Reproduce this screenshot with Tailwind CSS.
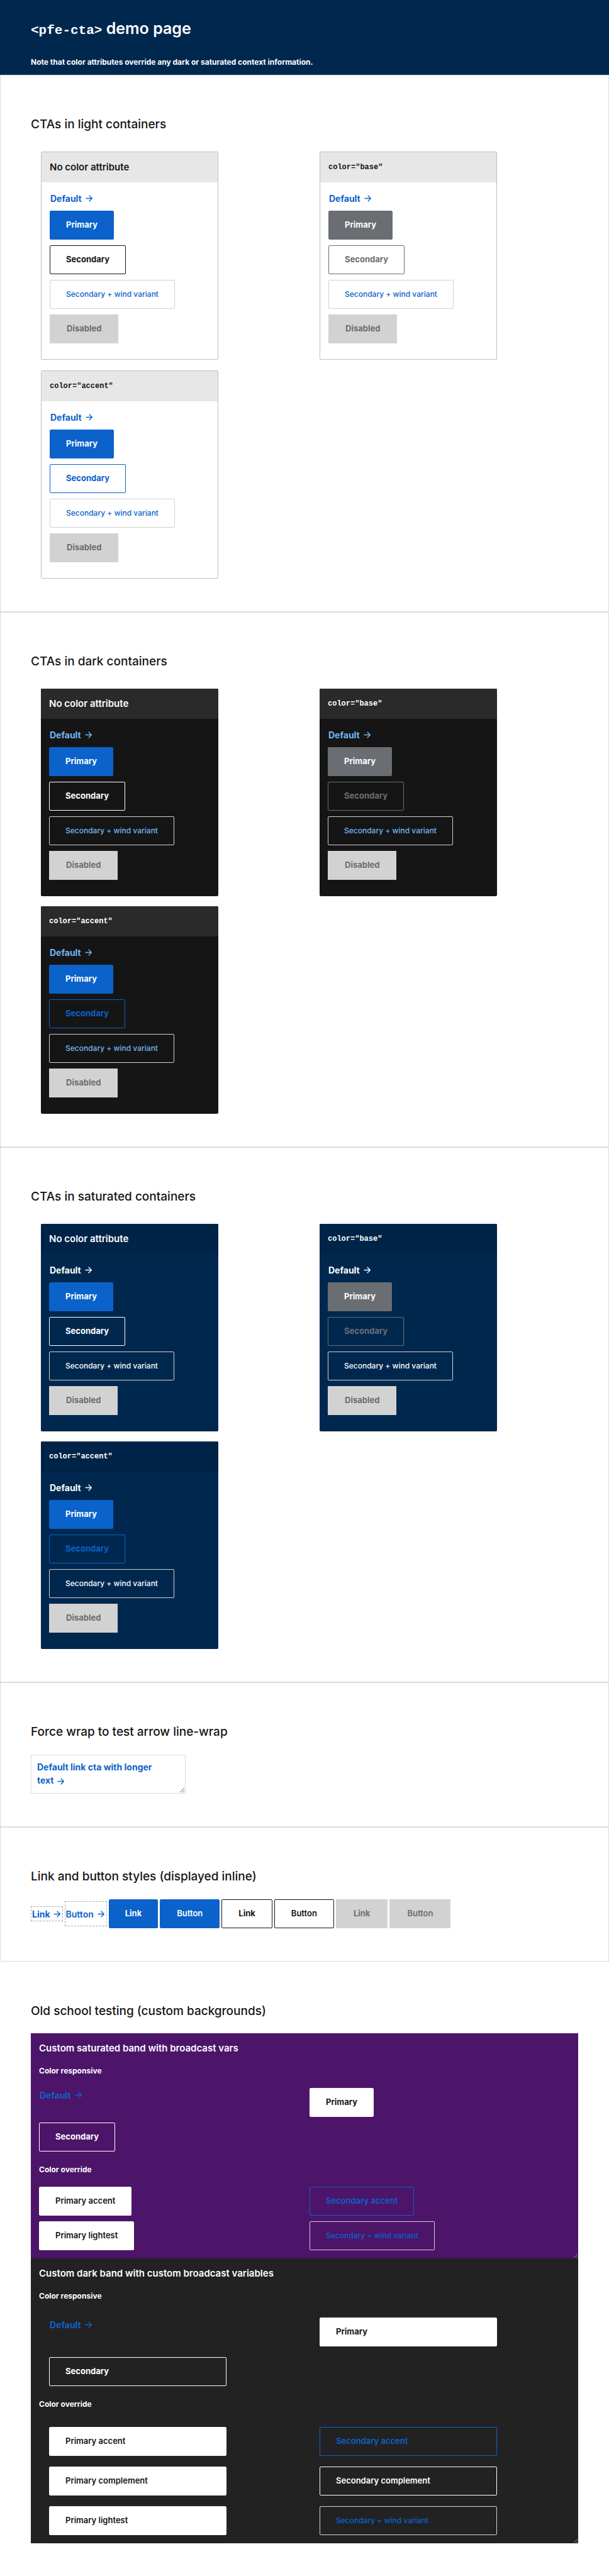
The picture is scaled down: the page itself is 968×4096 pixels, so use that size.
<!DOCTYPE html>
<html lang="en">
<head>
<meta charset="utf-8">
<meta name="viewport" content="width=device-width, initial-scale=1">
<title>pfe-cta demo page</title>
<script src="https://cdn.jsdelivr.net/npm/@tailwindcss/browser@4"></script>
</head>
<body class="bg-white font-['Inter',sans-serif] text-[#151515]">
<svg class="hidden" aria-hidden="true"><symbol id="arrow" viewBox="0 0 12 12"><path d="M0.6 6H11.2M6.2 0.9L11.3 6L6.2 11.1" fill="none" stroke="currentColor" stroke-width="1.5"/></symbol></svg>

<header class="h-[119px] bg-[#00284f] px-[49px] pt-7 text-white">
  <h1 class="text-[25px] leading-[34px] font-semibold"><code class="font-['Liberation_Mono',monospace] text-[21px] font-bold">&lt;pfe-cta&gt;</code> demo page</h1>
  <p class="mt-[23px] text-[12px] leading-5 font-bold">Note that color attributes override any dark or saturated context information.</p>
</header>

<main>
  <!-- Light containers -->
  <section class="border border-[#dcdcdc] px-12 pt-[65px] pb-[52px]">
    <h2 class="text-[19px] leading-[26px] font-medium">CTAs in light containers</h2>
    <div class="mt-[30px] grid grid-cols-2 gap-x-4 gap-y-[17px]">
      <article class="mx-4 max-w-[282px] rounded-[2px] border border-[#bfbfbf] text-[13px] font-bold">
        <h3 class="flex h-12 items-center bg-[#e7e7e7] px-[13px] text-[15px] font-semibold">No color attribute</h3>
        <div class="flex flex-col items-start gap-[9px] px-[13px] pt-[15px] pb-[25px]">
          <a href="#" class="flex h-[21px] items-center gap-1.5 pl-px text-[14px] text-[#0b62ca]">Default <svg class="size-[11px]"><use href="#arrow"/></svg></a>
          <a href="#" class="flex h-[46px] items-center rounded-[2px] border border-[#0b62ca] bg-[#0b62ca] px-[25px] text-white">Primary</a>
          <a href="#" class="flex h-[46px] items-center rounded-[2px] border border-[#151515] px-[25px]">Secondary</a>
          <a href="#" class="flex h-[46px] items-center rounded-[2px] border border-[#d2d2d2] px-[25px] text-[12px] font-medium text-[#0b62ca]">Secondary + wind variant</a>
          <a href="#" aria-disabled="true" class="flex h-[46px] items-center bg-[#d2d2d2] px-[27px] text-[#6a6e73]">Disabled</a>
        </div>
      </article>
      <article class="mx-4 max-w-[282px] rounded-[2px] border border-[#bfbfbf] text-[13px] font-bold">
        <h3 class="flex h-12 items-center bg-[#e7e7e7] px-[13px]"><code class="font-['Liberation_Mono',monospace] text-[12px] font-bold">color="base"</code></h3>
        <div class="flex flex-col items-start gap-[9px] px-[13px] pt-[15px] pb-[25px]">
          <a href="#" class="flex h-[21px] items-center gap-1.5 pl-px text-[14px] text-[#0b62ca]">Default <svg class="size-[11px]"><use href="#arrow"/></svg></a>
          <a href="#" class="flex h-[46px] items-center rounded-[2px] border border-[#6a6e73] bg-[#6a6e73] px-[25px] text-white">Primary</a>
          <a href="#" class="flex h-[46px] items-center rounded-[2px] border border-[#6a6e73] px-[25px] text-[#6a6e73]">Secondary</a>
          <a href="#" class="flex h-[46px] items-center rounded-[2px] border border-[#d2d2d2] px-[25px] text-[12px] font-medium text-[#0b62ca]">Secondary + wind variant</a>
          <a href="#" aria-disabled="true" class="flex h-[46px] items-center bg-[#d2d2d2] px-[27px] text-[#6a6e73]">Disabled</a>
        </div>
      </article>
      <article class="mx-4 max-w-[282px] rounded-[2px] border border-[#bfbfbf] text-[13px] font-bold">
        <h3 class="flex h-12 items-center bg-[#e7e7e7] px-[13px]"><code class="font-['Liberation_Mono',monospace] text-[12px] font-bold">color="accent"</code></h3>
        <div class="flex flex-col items-start gap-[9px] px-[13px] pt-[15px] pb-[25px]">
          <a href="#" class="flex h-[21px] items-center gap-1.5 pl-px text-[14px] text-[#0b62ca]">Default <svg class="size-[11px]"><use href="#arrow"/></svg></a>
          <a href="#" class="flex h-[46px] items-center rounded-[2px] border border-[#0b62ca] bg-[#0b62ca] px-[25px] text-white">Primary</a>
          <a href="#" class="flex h-[46px] items-center rounded-[2px] border border-[#0b62ca] px-[25px] text-[#0b62ca]">Secondary</a>
          <a href="#" class="flex h-[46px] items-center rounded-[2px] border border-[#d2d2d2] px-[25px] text-[12px] font-medium text-[#0b62ca]">Secondary + wind variant</a>
          <a href="#" aria-disabled="true" class="flex h-[46px] items-center bg-[#d2d2d2] px-[27px] text-[#6a6e73]">Disabled</a>
        </div>
      </article>
    </div>
  </section>

  <!-- Dark containers -->
  <section class="border border-[#dcdcdc] px-12 pt-[65px] pb-[52px]">
    <h2 class="text-[19px] leading-[26px] font-medium">CTAs in dark containers</h2>
    <div class="mt-[30px] grid grid-cols-2 gap-4">
      <article class="mx-4 max-w-[282px] overflow-hidden rounded-[2px] bg-[#151515] text-[13px] font-bold text-white">
        <h3 class="flex h-12 items-center bg-[#2a2a2a] px-[13px] text-[15px] font-semibold">No color attribute</h3>
        <div class="flex flex-col items-start gap-[9px] px-[13px] pt-[15px] pb-[26px]">
          <a href="#" class="flex h-[21px] items-center gap-1.5 pl-px text-[14px] text-[#73b8f5]">Default <svg class="size-[11px]"><use href="#arrow"/></svg></a>
          <a href="#" class="flex h-[46px] items-center rounded-[2px] border border-[#0b62ca] bg-[#0b62ca] px-[25px]">Primary</a>
          <a href="#" class="flex h-[46px] items-center rounded-[2px] border border-white px-[25px]">Secondary</a>
          <a href="#" class="flex h-[46px] items-center rounded-[2px] border border-[#d2d2d2] px-[25px] text-[12px] font-medium text-[#73b8f5]">Secondary + wind variant</a>
          <a href="#" aria-disabled="true" class="flex h-[46px] items-center bg-[#d2d2d2] px-[27px] text-[#6a6e73]">Disabled</a>
        </div>
      </article>
      <article class="mx-4 max-w-[282px] overflow-hidden rounded-[2px] bg-[#151515] text-[13px] font-bold text-white">
        <h3 class="flex h-12 items-center bg-[#2a2a2a] px-[13px]"><code class="font-['Liberation_Mono',monospace] text-[12px] font-bold">color="base"</code></h3>
        <div class="flex flex-col items-start gap-[9px] px-[13px] pt-[15px] pb-[26px]">
          <a href="#" class="flex h-[21px] items-center gap-1.5 pl-px text-[14px] text-[#73b8f5]">Default <svg class="size-[11px]"><use href="#arrow"/></svg></a>
          <a href="#" class="flex h-[46px] items-center rounded-[2px] border border-[#6a6e73] bg-[#6a6e73] px-[25px]">Primary</a>
          <a href="#" class="flex h-[46px] items-center rounded-[2px] border border-[#6a6e73] px-[25px] text-[#6a6e73]">Secondary</a>
          <a href="#" class="flex h-[46px] items-center rounded-[2px] border border-[#d2d2d2] px-[25px] text-[12px] font-medium text-[#73b8f5]">Secondary + wind variant</a>
          <a href="#" aria-disabled="true" class="flex h-[46px] items-center bg-[#d2d2d2] px-[27px] text-[#6a6e73]">Disabled</a>
        </div>
      </article>
      <article class="mx-4 max-w-[282px] overflow-hidden rounded-[2px] bg-[#151515] text-[13px] font-bold text-white">
        <h3 class="flex h-12 items-center bg-[#2a2a2a] px-[13px]"><code class="font-['Liberation_Mono',monospace] text-[12px] font-bold">color="accent"</code></h3>
        <div class="flex flex-col items-start gap-[9px] px-[13px] pt-[15px] pb-[26px]">
          <a href="#" class="flex h-[21px] items-center gap-1.5 pl-px text-[14px] text-[#73b8f5]">Default <svg class="size-[11px]"><use href="#arrow"/></svg></a>
          <a href="#" class="flex h-[46px] items-center rounded-[2px] border border-[#0b62ca] bg-[#0b62ca] px-[25px]">Primary</a>
          <a href="#" class="flex h-[46px] items-center rounded-[2px] border border-[#0b62ca] px-[25px] text-[#0b62ca]">Secondary</a>
          <a href="#" class="flex h-[46px] items-center rounded-[2px] border border-[#d2d2d2] px-[25px] text-[12px] font-medium text-[#73b8f5]">Secondary + wind variant</a>
          <a href="#" aria-disabled="true" class="flex h-[46px] items-center bg-[#d2d2d2] px-[27px] text-[#6a6e73]">Disabled</a>
        </div>
      </article>
    </div>
  </section>

  <!-- Saturated containers -->
  <section class="border border-[#dcdcdc] px-12 pt-[65px] pb-[52px]">
    <h2 class="text-[19px] leading-[26px] font-medium">CTAs in saturated containers</h2>
    <div class="mt-[30px] grid grid-cols-2 gap-4">
      <article class="mx-4 max-w-[282px] overflow-hidden rounded-[2px] bg-[#00284f] text-[13px] font-bold text-white">
        <h3 class="flex h-12 items-center bg-[#002448] px-[13px] text-[15px] font-semibold">No color attribute</h3>
        <div class="flex flex-col items-start gap-[9px] px-[13px] pt-[15px] pb-[26px]">
          <a href="#" class="flex h-[21px] items-center gap-1.5 pl-px text-[14px]">Default <svg class="size-[11px]"><use href="#arrow"/></svg></a>
          <a href="#" class="flex h-[46px] items-center rounded-[2px] border border-[#0b62ca] bg-[#0b62ca] px-[25px]">Primary</a>
          <a href="#" class="flex h-[46px] items-center rounded-[2px] border border-white px-[25px]">Secondary</a>
          <a href="#" class="flex h-[46px] items-center rounded-[2px] border border-[#d2d2d2] px-[25px] text-[12px] font-medium">Secondary + wind variant</a>
          <a href="#" aria-disabled="true" class="flex h-[46px] items-center bg-[#d2d2d2] px-[27px] text-[#6a6e73]">Disabled</a>
        </div>
      </article>
      <article class="mx-4 max-w-[282px] overflow-hidden rounded-[2px] bg-[#00284f] text-[13px] font-bold text-white">
        <h3 class="flex h-12 items-center bg-[#002448] px-[13px]"><code class="font-['Liberation_Mono',monospace] text-[12px] font-bold">color="base"</code></h3>
        <div class="flex flex-col items-start gap-[9px] px-[13px] pt-[15px] pb-[26px]">
          <a href="#" class="flex h-[21px] items-center gap-1.5 pl-px text-[14px]">Default <svg class="size-[11px]"><use href="#arrow"/></svg></a>
          <a href="#" class="flex h-[46px] items-center rounded-[2px] border border-[#6a6e73] bg-[#6a6e73] px-[25px]">Primary</a>
          <a href="#" class="flex h-[46px] items-center rounded-[2px] border border-[#6a6e73] px-[25px] text-[#6a6e73]">Secondary</a>
          <a href="#" class="flex h-[46px] items-center rounded-[2px] border border-[#d2d2d2] px-[25px] text-[12px] font-medium">Secondary + wind variant</a>
          <a href="#" aria-disabled="true" class="flex h-[46px] items-center bg-[#d2d2d2] px-[27px] text-[#6a6e73]">Disabled</a>
        </div>
      </article>
      <article class="mx-4 max-w-[282px] overflow-hidden rounded-[2px] bg-[#00284f] text-[13px] font-bold text-white">
        <h3 class="flex h-12 items-center bg-[#002448] px-[13px]"><code class="font-['Liberation_Mono',monospace] text-[12px] font-bold">color="accent"</code></h3>
        <div class="flex flex-col items-start gap-[9px] px-[13px] pt-[15px] pb-[26px]">
          <a href="#" class="flex h-[21px] items-center gap-1.5 pl-px text-[14px]">Default <svg class="size-[11px]"><use href="#arrow"/></svg></a>
          <a href="#" class="flex h-[46px] items-center rounded-[2px] border border-[#0b62ca] bg-[#0b62ca] px-[25px]">Primary</a>
          <a href="#" class="flex h-[46px] items-center rounded-[2px] border border-[#0b62ca] px-[25px] text-[#0b62ca]">Secondary</a>
          <a href="#" class="flex h-[46px] items-center rounded-[2px] border border-[#d2d2d2] px-[25px] text-[12px] font-medium">Secondary + wind variant</a>
          <a href="#" aria-disabled="true" class="flex h-[46px] items-center bg-[#d2d2d2] px-[27px] text-[#6a6e73]">Disabled</a>
        </div>
      </article>
    </div>
  </section>

  <!-- Wrapping link -->
  <section class="border border-[#dcdcdc] px-12 pt-[65px] pb-[52px]">
    <h2 class="text-[19px] leading-[26px] font-medium">Force wrap to test arrow line-wrap</h2>
    <div class="mt-[23px] h-[62px] w-[246px] resize overflow-hidden border border-[#dcdcdc] px-[9px] py-2">
      <a href="#" class="block text-[14px] leading-[21px] font-bold text-[#0b62ca]">Default link cta with longer<br>text <svg class="ml-0.5 inline size-[11px]"><use href="#arrow"/></svg></a>
    </div>
  </section>

  <!-- Inline links and buttons -->
  <section class="border border-[#dcdcdc] px-12 pt-[65px] pb-[52px]">
    <h2 class="text-[19px] leading-[26px] font-medium">Link and button styles (displayed inline)</h2>
    <div class="mt-[23px] flex h-[46px] items-center gap-[3px] text-[13px] font-bold">
      <a href="#" class="flex h-6 items-center gap-[5px] border border-dashed border-[#aaaaaa] pr-[3px] pl-px text-[14px] text-[#0b62ca]">Link <svg class="size-[11px]"><use href="#arrow"/></svg></a>
      <button class="flex h-10 items-center gap-1.5 border border-dashed border-[#aaaaaa] pr-[3px] pl-px text-[14px] font-semibold text-[#0b62ca]">Button <svg class="size-[11px]"><use href="#arrow"/></svg></button>
      <a href="#" class="flex h-[46px] items-center rounded-[2px] border border-[#0b62ca] bg-[#0b62ca] px-[25px] text-white">Link</a>
      <button class="h-[46px] rounded-[2px] border border-[#0b62ca] bg-[#0b62ca] px-[26px] font-semibold text-white">Button</button>
      <a href="#" class="flex h-[46px] items-center rounded-[2px] border border-[#151515] px-[26px]">Link</a>
      <button class="h-[46px] rounded-[2px] border border-[#151515] px-[26px] font-semibold">Button</button>
      <a href="#" aria-disabled="true" class="flex h-[46px] items-center bg-[#d2d2d2] px-7 text-[#6a6e73]">Link</a>
      <button disabled class="h-[46px] bg-[#d2d2d2] px-7 font-semibold text-[#6a6e73]">Button</button>
    </div>
  </section>

  <!-- Custom backgrounds -->
  <section class="border border-transparent px-12 pt-[65px] pb-[51px]">
    <h2 class="text-[19px] leading-[26px] font-medium">Old school testing (custom backgrounds)</h2>

    <div class="mt-[22px] resize overflow-hidden bg-[#4c1569] px-[13px] pt-3 pb-[13px] text-[13px] font-bold text-white">
      <h3 class="text-[15px] leading-6 font-semibold">Custom saturated band with broadcast vars</h3>
      <h4 class="mt-3.5 text-[12px] leading-5">Color responsive</h4>
      <div class="mt-[17px] grid grid-cols-2 items-start justify-items-start gap-x-4 gap-y-[9px]">
        <a href="#" class="mt-px flex h-[21px] items-center gap-1.5 pl-px text-[14px] text-[#0b62ca]">Default <svg class="size-[11px]"><use href="#arrow"/></svg></a>
        <a href="#" class="flex h-[46px] items-center rounded-[2px] border border-white bg-white px-[25px] text-[#151515]">Primary</a>
        <a href="#" class="flex h-[46px] items-center rounded-[2px] border border-white px-[25px]">Secondary</a>
      </div>
      <h4 class="mt-[19px] text-[12px] leading-5">Color override</h4>
      <div class="mt-[17px] grid grid-cols-2 items-start justify-items-start gap-x-4 gap-y-[9px]">
        <a href="#" class="flex h-[46px] items-center rounded-[2px] border border-white bg-white px-[25px] font-semibold text-[#151515]">Primary accent</a>
        <a href="#" class="flex h-[46px] items-center rounded-[2px] border border-[#0b62ca] px-[25px] font-semibold text-[#0b62ca]">Secondary accent</a>
        <a href="#" class="flex h-[46px] items-center rounded-[2px] border border-white bg-white px-[25px] font-semibold text-[#151515]">Primary lightest</a>
        <a href="#" class="flex h-[46px] items-center rounded-[2px] border border-[#d2d2d2] px-[25px] text-[12px] font-medium text-[#0b62ca]">Secondary + wind variant</a>
      </div>
    </div>

    <div class="resize overflow-hidden bg-[#222222] px-[13px] pt-3 pb-[13px] text-[13px] font-bold text-white">
      <h3 class="text-[15px] leading-6 font-semibold">Custom dark band with custom broadcast variables</h3>
      <h4 class="mt-3.5 text-[12px] leading-5">Color responsive</h4>
      <div class="mt-6 grid grid-cols-2 items-start gap-x-4 gap-y-[17px]">
        <a href="#" class="mx-4 mt-px flex h-[21px] items-center gap-1.5 pl-px text-[14px] text-[#0b62ca]">Default <svg class="size-[11px]"><use href="#arrow"/></svg></a>
        <a href="#" class="mx-4 flex h-[46px] max-w-[282px] items-center rounded-[2px] border border-white bg-white px-[25px] text-[#151515]">Primary</a>
        <a href="#" class="mx-4 flex h-[46px] max-w-[282px] items-center rounded-[2px] border border-white px-[25px]">Secondary</a>
      </div>
      <h4 class="mt-[19px] text-[12px] leading-5">Color override</h4>
      <div class="mt-[26px] grid grid-cols-2 items-start gap-x-4 gap-y-[17px] font-semibold">
        <a href="#" class="mx-4 flex h-[46px] max-w-[282px] items-center rounded-[2px] border border-white bg-white px-[25px] text-[#151515]">Primary accent</a>
        <a href="#" class="mx-4 flex h-[46px] max-w-[282px] items-center rounded-[2px] border border-[#0b62ca] px-[25px] text-[#0b62ca]">Secondary accent</a>
        <a href="#" class="mx-4 flex h-[46px] max-w-[282px] items-center rounded-[2px] border border-white bg-white px-[25px] text-[#151515]">Primary complement</a>
        <a href="#" class="mx-4 flex h-[46px] max-w-[282px] items-center rounded-[2px] border border-white px-[25px]">Secondary complement</a>
        <a href="#" class="mx-4 flex h-[46px] max-w-[282px] items-center rounded-[2px] border border-white bg-white px-[25px] text-[#151515]">Primary lightest</a>
        <a href="#" class="mx-4 flex h-[46px] max-w-[282px] items-center rounded-[2px] border border-[#d2d2d2] px-[25px] text-[12px] font-medium text-[#0b62ca]">Secondary + wind variant</a>
      </div>
    </div>
  </section>
</main>
</body>
</html>
